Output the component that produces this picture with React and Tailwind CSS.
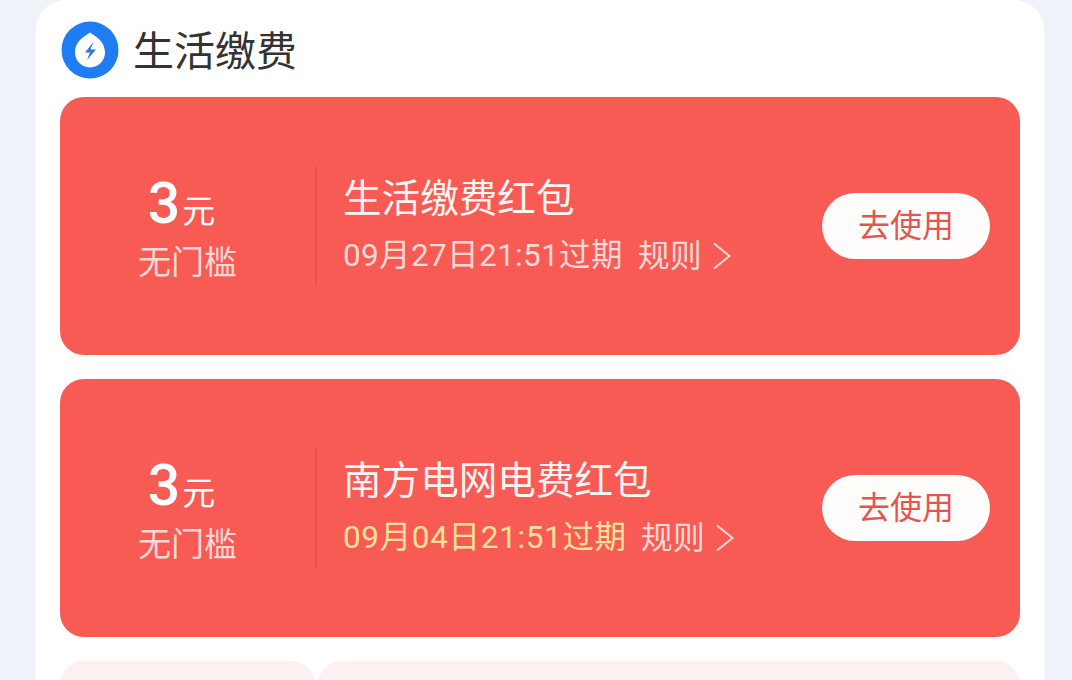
const FONT = "font-['Roboto','Noto_Sans_CJK_SC',sans-serif]";

function Chevron({ className }) {
  return (
    <svg viewBox="0 0 20 28" className={className} fill="none" stroke="currentColor" strokeWidth="2">
      <path d="M2 1.5 L17.5 14 L2 26.5" />
    </svg>
  );
}

function Coupon({ title, date, dateClass, gapClass }) {
  return (
    <div className="flex h-[258px] items-center rounded-[24px] bg-[#f85a54]">
      <div className="flex h-[120px] w-[257px] shrink-0 flex-col items-center border-r-2 border-[#e8544e] pt-[9px]">
        <div className="flex h-[64px] items-baseline pr-[12px] leading-none text-white">
          <span className="text-[57px] font-medium">3</span>
          <span className="ml-[2px] text-[33px]">元</span>
        </div>
        <div className="mt-[1px] text-[33px] leading-[46px] text-[#fcd9d6]">无门槛</div>
      </div>
      <div className="flex min-w-0 flex-1 flex-col pl-[26px]">
        <div className="mt-[1px] text-[38.6px] leading-[56px] text-[#fff5f3]">{title}</div>
        <div className="mt-[2px] flex items-center text-[#fcd9d6]">
          <span className={`text-[31.5px] leading-[54px] ${dateClass}`}>{date}</span>
          <span className={`text-[32px] leading-[54px] ${gapClass}`}>规则</span>
          <Chevron className="ml-[10px] h-[28px] w-[20px]" />
        </div>
      </div>
      <div className="mr-[30px] flex h-[66px] w-[168px] shrink-0 items-center justify-center rounded-full bg-[#fffdfc] text-[32px] text-[#e5544f]">
        去使用
      </div>
    </div>
  );
}

export default function App() {
  return (
    <div className={`h-[680px] w-[1072px] overflow-hidden bg-[#eff3f9] pl-[36px] pr-[28px] ${FONT}`}>
      <div className="h-[720px] rounded-t-[30px] bg-white px-[24px]">
        <div className="flex h-[97px] items-center pt-[2px]">
          <svg viewBox="0 0 58 58" className="ml-[1px] h-[58px] w-[58px] shrink-0">
            <circle cx="29" cy="29" r="28.5" fill="#1f7df4" />
            <path d="M29 11.5 C32 14 44 19 44 31.5 A15 15 0 0 1 14 31.5 C14 19 26 14 29 11.5 Z" fill="#fff" />
            <path d="M32.5 21 L24 31.5 H29 L26 39 L35 28.5 H29.5 Z" fill="#2b78d6" />
          </svg>
          <div className="ml-[14px] mt-[5px] text-[41px] leading-none text-[#333333]">生活缴费</div>
        </div>
        <div className="flex flex-col gap-[24px]">
          <Coupon title="生活缴费红包" date="09月27日21:51过期" dateClass="tracking-[0.35px]" gapClass="ml-[15px]" />
          <Coupon title="南方电网电费红包" date="09月04日21:51过期" dateClass="tracking-[0.65px] text-[#fde29a]" gapClass="ml-[14px]" />
          <div className="flex h-[100px] gap-[3px]">
            <div className="w-[255px] rounded-[24px] bg-[#fdf0f1]" />
            <div className="flex-1 rounded-[24px] bg-[#fdf0f1]" />
          </div>
        </div>
      </div>
    </div>
  );
}
